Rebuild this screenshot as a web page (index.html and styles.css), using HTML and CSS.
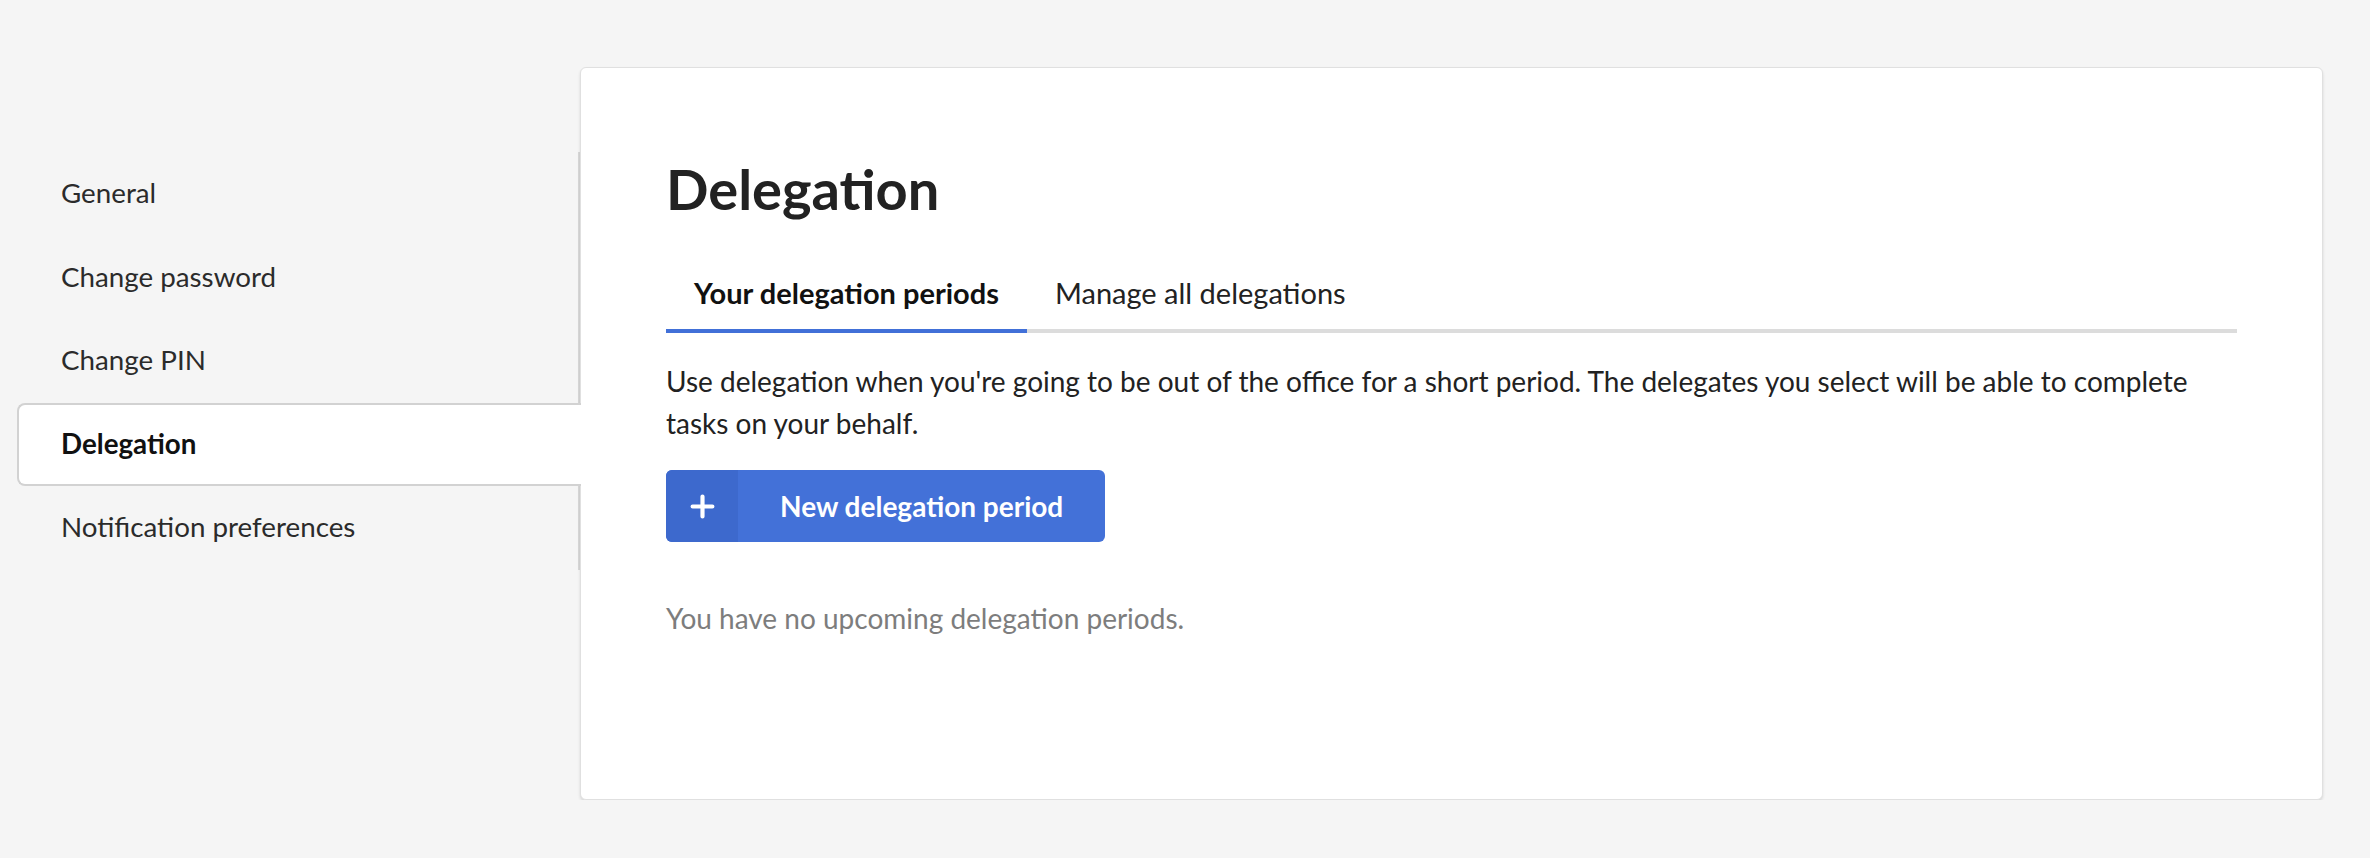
FILE: index.html
```html
<!DOCTYPE html>
<html lang="en">
<head>
<meta charset="utf-8">
<title>Delegation</title>
<link rel="stylesheet" href="styles.css">
</head>
<body>
<div class="page">
  <nav class="sidenav">
    <a class="nav-item" href="#">General</a>
    <a class="nav-item" href="#">Change password</a>
    <a class="nav-item" href="#">Change PIN</a>
    <a class="nav-item active" href="#">Delegation</a>
    <a class="nav-item" href="#">Notification preferences</a>
  </nav>
  <main class="card">
    <h1 class="title">Delegation</h1>
    <div class="tabs">
      <a class="tab active" href="#">Your delegation periods</a>
      <a class="tab" href="#">Manage all delegations</a>
    </div>
    <p class="intro">Use delegation when you're going to be out of the office for a short period. The delegates you select will be able to complete tasks on your behalf.</p>
    <button class="btn" type="button">
      <span class="btn-icon">
        <svg width="25" height="25" viewBox="0 0 24 24" aria-hidden="true"><path d="M12 2.5v19M2.5 12h19" stroke="#ffffff" stroke-width="4" stroke-linecap="round" fill="none"/></svg>
      </span>
      <span class="btn-label">New delegation period</span>
    </button>
    <p class="empty">You have no upcoming delegation periods.</p>
  </main>
</div>
</body>
</html>
```

FILE: styles.css
```css
* { box-sizing: border-box; }

html, body {
  margin: 0;
  padding: 0;
  background: #f5f5f5;
  font-family: Lato, "Open Sans", "Liberation Sans", sans-serif;
  color: #222222;
}

.page {
  display: flex;
  align-items: flex-start;
  padding: 67px 0 0 17px;
}

.sidenav {
  width: 563px;
  flex: none;
  margin-top: 85px;
  display: flex;
  flex-direction: column;
  border-right: 2px solid #d8d8d8;
}

.nav-item {
  display: flex;
  align-items: center;
  height: 83.5px;
  padding: 0 0 2px 42px;
  font-size: 27.75px;
  color: #2b2b2b;
  text-decoration: none;
  border: 2px solid transparent;
  border-right: 0;
}

.nav-item.active {
  position: relative;
  z-index: 1;
  margin-right: -3px;
  background: #ffffff;
  border-color: #d2d2d2;
  border-radius: 8px 0 0 8px;
  font-weight: 700;
  color: #111111;
}

.card {
  width: 1743px;
  flex: none;
  background: #ffffff;
  border: 1px solid #e0e0e0;
  border-radius: 6px;
  box-shadow: 0 2px 3px rgba(0, 0, 0, 0.12);
  padding: 87px 85px 160px 85px;
}

.title {
  margin: 0 0 34px 0;
  font-size: 56px;
  line-height: 1.2;
  font-weight: 700;
  color: #222222;
}

.tabs {
  display: flex;
  border-bottom: 4px solid #dcdcdc;
}

.tab {
  display: block;
  padding: 19px 28px;
  margin-bottom: -4px;
  border-bottom: 4px solid transparent;
  font-size: 29px;
  line-height: 35px;
  color: #222222;
  text-decoration: none;
}

.tab.active {
  font-weight: 700;
  color: #111111;
  border-bottom-color: #4170d8;
}

.intro {
  margin: 27px 0 26px 0;
  font-size: 28px;
  line-height: 42px;
  color: #222222;
}

.btn {
  display: flex;
  align-items: stretch;
  height: 72px;
  padding: 0;
  border: 0;
  border-radius: 6px;
  overflow: hidden;
  background: #4371d8;
  font-family: inherit;
  cursor: pointer;
}

.btn-icon {
  width: 72px;
  display: flex;
  align-items: center;
  justify-content: center;
  background: #3d69cd;
}

.btn-label {
  display: flex;
  align-items: center;
  padding: 0 42px;
  font-size: 28px;
  font-weight: 700;
  color: #ffffff;
}

.empty {
  margin: 55px 0 0 0;
  font-size: 28px;
  line-height: 42px;
  color: #7d7d7d;
}
```
